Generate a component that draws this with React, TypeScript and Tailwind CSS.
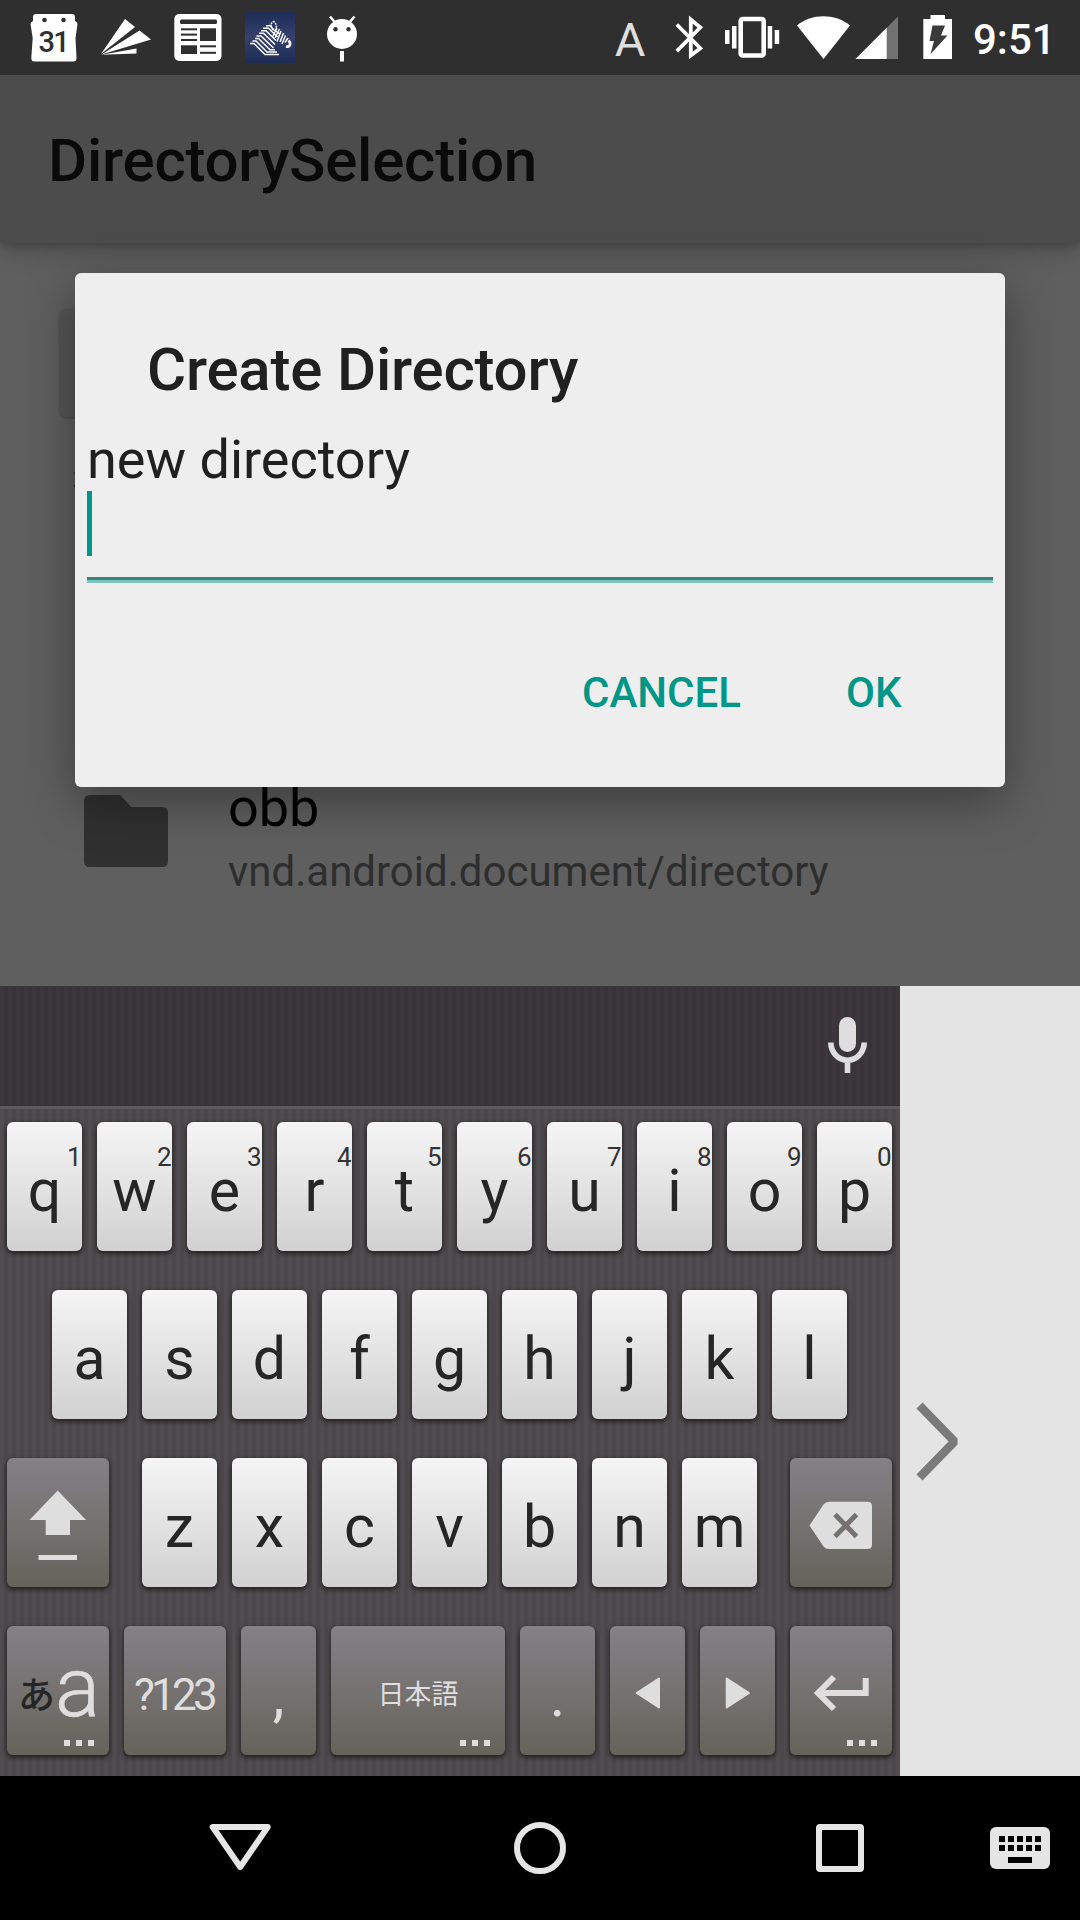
import React from "react";

function StatusBar() {
  return (
    <header className="flex h-[75px] w-full shrink-0 items-center justify-between bg-[#2f2f2f] pr-[27px] pl-[30px] text-white">
      <div className="flex items-center">
        <svg className="h-[75px] w-[49px]" viewBox="30 0 49 75" fill="#fff">
          <path d="M36 14H72Q75 14 75 17V21Q77.500 22 77.500 24L75.500 38L76.500 58Q76.500 61.500 73.500 61.500H34.500Q31.300 61.500 31.300 58L32.700 38L30.500 24Q30.500 22 33 21V17Q33 14 36 14Z" />
          <circle cx="44.500" cy="20" r="2.300" fill="#2f2f2f" />
          <circle cx="63.500" cy="20" r="2.300" fill="#2f2f2f" />
          <text x="53.300" y="51.600" textAnchor="middle" fill="#2f2f2f" fontFamily="Roboto" fontWeight="500" fontSize="29" letterSpacing="-1.600">31</text>
        </svg>
        <svg className="ml-[21px] h-[75px] w-[52px]" viewBox="100 0 52 75" fill="#fff">
          <path d="M125 19L135 27L101 54Z" />
          <path d="M139.500 30.500L151 39.500L101.500 54.500Z" />
          <path d="M136.500 48.500V53.500L101.500 54.700Z" />
        </svg>
        <svg className="ml-[22px] h-[75px] w-[48px]" viewBox="174 0 48 75">
          <rect x="174.300" y="14" width="47.200" height="47" rx="5" fill="#fff" />
          <g fill="#2f2f2f">
            <rect x="180" y="19.500" width="37" height="4.500" rx="1.500" />
            <rect x="181" y="28.300" width="16" height="2" />
            <rect x="181" y="33.600" width="16" height="2" />
            <rect x="181" y="39" width="16" height="2" />
            <rect x="200" y="28.300" width="16" height="12.700" />
            <rect x="181" y="45.300" width="16" height="8.700" />
            <rect x="200" y="45.300" width="16" height="2" />
            <rect x="200" y="51.800" width="16" height="2" />
          </g>
        </svg>
        <svg className="ml-[23px] h-[75px] w-[50px]" viewBox="245 0 50 75" fill="none">
          <defs>
            <linearGradient id="zebraSky" x1="0" y1="0" x2="0" y2="1">
              <stop offset="0" stopColor="#1d2c57" />
              <stop offset="0.500" stopColor="#36426d" />
              <stop offset="1" stopColor="#1c2a54" />
            </linearGradient>
          </defs>
          <rect x="245" y="12" width="50" height="51" fill="url(#zebraSky)" />
          <g stroke="#fff" strokeWidth="1.450">
            <path d="M250 43.500H254L265 54.500H279" />
            <path d="M252.500 41H256L267 52H277" />
            <path d="M255 38.500H258.500L270 49.700H275" />
            <path d="M256.500 36H261L273.500 48" />
            <path d="M259 33.300H263.500L275 44.500" />
            <path d="M261 30.800H266L276 40.500" />
            <path d="M263 28.300H268.500L277.500 37" />
            <path d="M266 26L270 25.500L274 30L280 34" />
            <path d="M273 30C270 26 271 22 273.500 21.500C276.500 23 277 27 275.500 30" strokeDasharray="2 1" />
            <path d="M277 28L272.500 37" />
            <path d="M279.500 29L275 38" />
            <path d="M281 31L277 41.500" />
            <path d="M283.500 33L280 42" />
            <path d="M285.500 35.500L282 44" />
            <path d="M288 38L285 42.500" />
          </g>
          <path d="M286 46.500C290 47.500 291.500 43.500 288.500 40.500" stroke="#fff" strokeWidth="2.600" />
        </svg>
        <svg className="ml-[30px] h-[75px] w-[34px]" viewBox="325 0 34 75" fill="#fff">
          <circle cx="342" cy="34" r="15" />
          <path d="M330 16.500L336 23.500M354.500 16.500L348.500 23.500" stroke="#fff" strokeWidth="2.600" />
          <circle cx="335.500" cy="29.300" r="2.200" fill="#2f2f2f" />
          <circle cx="348.500" cy="29.300" r="2.200" fill="#2f2f2f" />
          <rect x="340" y="51" width="4" height="10.500" />
        </svg>
      </div>
      <div className="flex items-center">
        <span className="mt-[5px] flex w-[30px] justify-center text-[47px] leading-[56px] font-normal text-[#dedede]">A</span>
        <svg className="ml-[29px] h-[75px] w-[30px]" viewBox="674 0 30 75" fill="none" stroke="#fff" strokeWidth="3.800">
          <path d="M676.800 24.500L700.300 48.200L690.800 55.500V19.500L700.300 27.500L676.800 51.200" />
        </svg>
        <svg className="ml-[20px] h-[75px] w-[56px]" viewBox="724 0 56 75" fill="#fff">
          <rect x="740.700" y="19" width="23" height="36.500" rx="2" fill="none" stroke="#fff" strokeWidth="4.600" />
          <rect x="725" y="30" width="4.500" height="14" />
          <rect x="732" y="26" width="4.500" height="22.500" />
          <rect x="767.700" y="26" width="4.500" height="22.500" />
          <rect x="774.700" y="30" width="4.500" height="14" />
        </svg>
        <svg className="ml-[16px] h-[75px] w-[104px]" viewBox="796 0 104 75" fill="#fff">
          <path d="M823.500 59L797 25.500C812 13.300 835 13.300 850 25.500Z" />
          <path d="M855.500 59L898 16.500V59Z" fill="#727272" />
          <path d="M855.500 59L886.700 27.800V59Z" />
        </svg>
        <svg className="ml-[22px] h-[75px] w-[32px]" viewBox="922 0 32 75">
          <path d="M923.300 19H930.500V15H945V19H952V59H923.300Z" fill="#fff" />
          <path d="M932.500 25.500H945L941 35.500H947.500L930.500 54L934 41H929.500Z" fill="#3a3a3a" />
        </svg>
        <span className="mt-[5px] ml-[19px] w-[80px] text-[42px] leading-[50px] font-medium whitespace-nowrap">9:51</span>
      </div>
    </header>
  );
}

function CreateDialog() {
  return (
    <section className="absolute top-[198px] left-[75px] flex h-[514px] w-[930px] flex-col rounded-[6px] bg-[#eeeeee] shadow-[0_14px_50px_rgba(0,0,0,0.38)]">
      <h2 className="mt-[62px] ml-[72px] text-[60px] leading-[70px] font-medium tracking-[-0.2px] text-[#202020]">Create Directory</h2>
      <div className="mx-[12px] mt-[23px] flex flex-col">
        <label className="text-[54px] leading-[63px] text-[#202020]">new directory</label>
        <div className="flex h-[86px] items-start">
          <div className="h-[65px] w-[5px] bg-[#009688]" />
        </div>
        <div className="h-[3px] bg-[#39837a]" />
        <div className="h-[3px] bg-[#7bc2ba]" />
      </div>
      <div className="mt-[85px] flex pl-[507px] text-[42px] leading-[50px] font-medium text-[#009688]">
        <button className="w-[264px] text-left">CANCEL</button>
        <button className="text-left">OK</button>
      </div>
    </section>
  );
}

function AppScreen() {
  return (
    <main className="relative flex h-[911px] w-full shrink-0 flex-col overflow-hidden bg-[#5f5f5f]">
      <div className="flex h-[168px] w-full shrink-0 items-center bg-[#4c4c4c] pl-[48px] shadow-[0_5px_5px_-1px_rgba(0,0,0,0.13),0_12px_20px_-2px_rgba(0,0,0,0.18)]">
        <h1 className="mt-[4px] text-[60px] leading-[70px] font-medium tracking-[-0.22px] text-[#0a0a0a]">DirectorySelection</h1>
      </div>
      <div className="mt-[66px] ml-[60px] h-[108px] w-[300px] shrink-0 rounded-[6px] bg-[#565656] shadow-[0_1px_3px_rgba(0,0,0,0.3)]" />
      <div className="mt-[54px] ml-[73.5px] flex h-[18px] w-[6px] shrink-0 flex-col justify-between">
        <span className="h-[4px] w-full rounded-l-full bg-[#444444]" />
        <span className="h-[4px] w-full rounded-bl-full bg-[#2c2c2c]" />
      </div>
      <div className="mt-[292px] flex pl-[84px]">
        <svg className="mt-[14px] h-[72px] w-[84px]" viewBox="0 0 84 72" fill="#303030">
          <path d="M6 0H36L47.500 12H78Q84 12 84 18V66Q84 72 78 72H6Q0 72 0 66V6Q0 0 6 0Z" />
        </svg>
        <div className="ml-[60px] flex flex-col">
          <div className="mt-[-5px] text-[54px] leading-[63px] text-black">obb</div>
          <div className="mt-[8px] text-[42px] leading-[50px] text-[#2e2e2e]">vnd.android.document/directory</div>
        </div>
      </div>
      <CreateDialog />
    </main>
  );
}

const SHADOW = "shadow-[0_2px_4px_1px_rgba(0,0,0,0.5)]";

function LetterKey({ label, hint }: { label: string; hint?: string }) {
  return (
    <div className={"relative h-[129px] w-[75px] shrink-0 rounded-[6px] bg-linear-to-b from-[#f5f5f5] to-[#d1d1d1] text-center text-[#262626] " + SHADOW}>
      {hint && <span className="absolute top-[20px] right-[0.5px] text-[26px] leading-[30px] text-[#333333]">{hint}</span>}
      <span className="block pt-[34px] text-[59px] leading-[70px]">{label}</span>
    </div>
  );
}

function Dots() {
  return (
    <span className="absolute right-[15px] bottom-[9px] flex gap-[6px]">
      <span className="size-[6px] bg-[#dedede]" />
      <span className="size-[6px] bg-[#dedede]" />
      <span className="size-[6px] bg-[#dedede]" />
    </span>
  );
}

function DarkKey({ width, dots, children }: { width: string; dots?: boolean; children: React.ReactNode }) {
  return (
    <div className={"relative h-[129px] shrink-0 rounded-[6px] bg-linear-to-b from-[#868087] via-[#757271] to-[#66635c] text-center text-[#dedede] " + width + " " + SHADOW}>
      {children}
      {dots && <Dots />}
    </div>
  );
}

function Keyboard() {
  return (
    <section className="flex h-[790px] w-full shrink-0 bg-[#e4e4e4]">
      <div className="flex w-[900px] flex-col bg-[#4f4a4d] bg-[repeating-linear-gradient(90deg,#514c4f_0px,#514c4f_4px,#4c474a_4px,#4c474a_8px)]">
        <div className="flex h-[120px] justify-end bg-[#3b3539] bg-[repeating-linear-gradient(90deg,#3d373b_0px,#3d373b_4px,#393438_4px,#393438_8px)] pr-[33px]">
          <svg className="mt-[30px] h-[58px] w-[40px]" viewBox="827 1016 40 58">
            <rect x="839" y="1017" width="17" height="35" rx="8.500" fill="#dedede" />
            <path d="M830.800 1042.500A16.700 17.700 0 0 0 864.200 1042.500M847.500 1060V1073" fill="none" stroke="#dedede" strokeWidth="5.600" />
          </svg>
        </div>
        <div className="h-[3px] bg-[#5e595d]" />
        <div className="mt-[13px] flex flex-col gap-[39px]">
          <div className="flex gap-[15px] pl-[7px]">
            {"qwertyuiop".split("").map((k, i) => (
              <LetterKey key={k} label={k} hint={String((i + 1) % 10)} />
            ))}
          </div>
          <div className="flex gap-[15px] pl-[52px]">
            {"asdfghjkl".split("").map((k) => (
              <LetterKey key={k} label={k} />
            ))}
          </div>
          <div className="flex pl-[7px]">
            <DarkKey width="w-[102px]">
              <svg className="h-[129px] w-[102px]" viewBox="0 0 102 129" fill="#dedede">
                <path d="M50.700 32.500L79 62H63V77H38.700V62H22.500Z" />
                <rect x="31.500" y="97" width="38.500" height="5" />
              </svg>
            </DarkKey>
            <div className="flex gap-[15px] pr-[33px] pl-[33px]">
              {"zxcvbnm".split("").map((k) => (
                <LetterKey key={k} label={k} />
              ))}
            </div>
            <DarkKey width="w-[102px]">
              <svg className="h-[129px] w-[102px]" viewBox="0 0 102 129">
                <path d="M19.500 67.500L33.500 46.500Q35.500 43.700 39 43.700H77.500Q82 43.700 82 48V86.500Q82 91 77.500 91H39Q35.500 91 33.500 88.500Z" fill="#dedede" />
                <path d="M45 56.500L66.500 78.500M66.500 56.500L45 78.500" stroke="#757271" strokeWidth="5" />
              </svg>
            </DarkKey>
          </div>
          <div className="flex gap-[15px] pl-[7px]">
            <DarkKey width="w-[102px]" dots>
              <div className="flex items-start pl-[11px]">
                <span className="mt-[47px] font-['Noto_Sans_CJK_JP',sans-serif] text-[37px] leading-[40px] font-medium text-[#262626]">あ</span>
                <span className="mt-[1px] text-[84px] leading-[122px] font-light [-webkit-text-stroke:0.6px_#dedede]">a</span>
              </div>
            </DarkKey>
            <DarkKey width="w-[102px]">
              <span className="block pt-[43px] pr-[2px] text-[44px] leading-[52px] tracking-[-3.7px]">?123</span>
            </DarkKey>
            <DarkKey width="w-[75px]">
              <span className="block pt-[34px] text-[59px] leading-[70px]">,</span>
            </DarkKey>
            <DarkKey width="w-[174px]" dots>
              <span className="block pt-[47px] font-['Noto_Sans_CJK_JP',sans-serif] text-[27px] leading-[40px]">日本語</span>
            </DarkKey>
            <DarkKey width="w-[75px]">
              <span className="block pt-[35px] text-[59px] leading-[70px]">.</span>
            </DarkKey>
            <DarkKey width="w-[75px]">
              <svg className="h-[129px] w-[75px]" viewBox="0 0 75 129" fill="#dedede" stroke="#dedede" strokeWidth="2" strokeLinejoin="round">
                <path d="M26.700 67L49 52.500V81.500Z" />
              </svg>
            </DarkKey>
            <DarkKey width="w-[75px]">
              <svg className="h-[129px] w-[75px]" viewBox="0 0 75 129" fill="#dedede" stroke="#dedede" strokeWidth="2" strokeLinejoin="round">
                <path d="M49 67L26.700 52.500V81.500Z" />
              </svg>
            </DarkKey>
            <DarkKey width="w-[102px]" dots>
              <svg className="h-[129px] w-[102px]" viewBox="0 0 102 129" fill="none" stroke="#dedede" strokeWidth="6">
                <path d="M44 51L28 67L44 83M30 67H75.700V52" />
              </svg>
            </DarkKey>
          </div>
        </div>
      </div>
      <div className="flex-1">
        <svg className="mt-[415px] ml-[15px] h-[82px] w-[46px]" viewBox="915 1401 46 82" fill="none" stroke="#7a7a7a" strokeWidth="8.500">
          <path d="M919.500 1405.500L954.500 1441.500L919.500 1477.500" strokeLinejoin="bevel" />
        </svg>
      </div>
    </section>
  );
}

function NavBar() {
  return (
    <footer className="flex h-[144px] w-full shrink-0 items-center bg-black">
      <svg className="ml-[205px] h-[144px] w-[70px]" viewBox="205 1776 70 144" fill="none" stroke="#e5e5e5" strokeWidth="6" strokeLinejoin="round">
        <path d="M212.700 1827H267.700L240.200 1867Z" />
      </svg>
      <svg className="ml-[235px] h-[144px] w-[60px]" viewBox="510 1776 60 144" fill="none" stroke="#e5e5e5" strokeWidth="6">
        <circle cx="540" cy="1848" r="23" />
      </svg>
      <svg className="ml-[240px] h-[144px] w-[60px]" viewBox="810 1776 60 144">
        <path fillRule="evenodd" fill="#e5e5e5" d="M820 1824H860Q864 1824 864 1828V1868Q864 1872 860 1872H820Q816 1872 816 1868V1828Q816 1824 820 1824ZM822 1830V1866H858V1830Z" />
      </svg>
      <svg className="ml-[120px] h-[144px] w-[60px]" viewBox="990 1776 60 144">
        <rect x="990" y="1827" width="60" height="42" rx="6" fill="#e5e5e5" />
        {[999, 1008, 1017, 1026, 1035].map((x) => (
          <g key={x}>
            <rect x={x} y="1836" width="6" height="6" />
            <rect x={x} y="1845" width="6" height="6" />
          </g>
        ))}
        <rect x="1008" y="1857" width="24" height="6" />
      </svg>
    </footer>
  );
}

export default function App() {
  return (
    <div className="flex h-[1920px] w-[1080px] flex-col overflow-hidden bg-black font-['Roboto',sans-serif]">
      <StatusBar />
      <AppScreen />
      <Keyboard />
      <NavBar />
    </div>
  );
}
